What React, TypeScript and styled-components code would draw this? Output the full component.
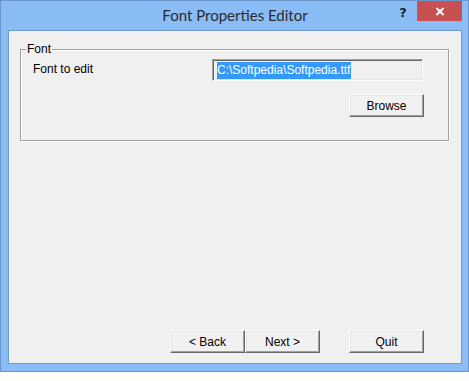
import React from "react";
import styled, { createGlobalStyle } from "styled-components";

const Global = createGlobalStyle`
  html, body { margin: 0; padding: 0; background: #ffffff; }
  * { box-sizing: border-box; }
`;

const Window = styled.div`
  width: 469px;
  height: 372px;
  border: 1px solid #6b96cc;
  background: #8abcf6;
  display: flex;
  flex-direction: column;
  padding: 0 6px 7px 7px;
`;

const TitleBar = styled.div`
  height: 29px;
  display: grid;
  grid-template-columns: 1fr auto 1fr;
  align-items: start;
  margin: 0 -6px 0 -7px;
  padding: 0 6px 0 7px;
`;

const Title = styled.div`
  grid-column: 2;
  font-family: "Lato", "Noto Sans", sans-serif;
  font-size: 15px;
  line-height: 29px;
  color: #2b2b2b;
`;

const Controls = styled.div`
  grid-column: 3;
  display: flex;
  justify-content: flex-end;
  align-items: flex-start;
`;

const HelpButton = styled.div`
  width: 28px;
  height: 21px;
  display: flex;
  align-items: center;
  justify-content: center;
  font-family: "DejaVu Sans", sans-serif;
  font-weight: bold;
  font-size: 13px;
  color: #222;
  padding-top: 1px;
`;

const CloseButton = styled.div`
  width: 45px;
  height: 20px;
  background: #c75050;
  display: flex;
  align-items: center;
  justify-content: center;
`;

const Client = styled.div`
  flex: 1;
  border: 1px solid #6f9ad0;
  background: #f0f0f0;
  display: flex;
  flex-direction: column;
  padding: 18px 12px 10px 11px;
  font-family: "Liberation Sans", Arial, sans-serif;
  font-size: 12px;
  color: #000;
`;

const GroupBox = styled.div`
  position: relative;
  height: 92px;
  border: 1px solid #a0a0a0;
  box-shadow: inset 1px 1px 0 #ffffff, 1px 1px 0 #ffffff;
  padding: 9px 25px 0 12px;
  display: flex;
  flex-direction: column;
  gap: 13px;
`;

const Caption = styled.span`
  position: absolute;
  top: -8px;
  left: 5px;
  padding: 0 1px;
  background: #f0f0f0;
  line-height: 14px;
`;

const Row = styled.div`
  display: flex;
  align-items: center;
  justify-content: ${(p: { $end?: boolean }) => (p.$end ? "flex-end" : "space-between")};
`;

const FieldLabel = styled.span`
  line-height: 14px;
  margin-top: -2px;
`;

const TextBox = styled.div`
  width: 211px;
  height: 22px;
  background: #f0f0f0;
  border-top: 1px solid #a0a0a0;
  border-left: 1px solid #a0a0a0;
  border-bottom: 1px solid #ffffff;
  border-right: 1px solid #ffffff;
  box-shadow: inset 1px 1px 0 #696969, inset -1px -1px 0 #e3e3e3;
  padding: 2px 0 0 4px;
  display: flex;
  align-items: flex-start;
`;

const Selection = styled.span`
  background: #3399ff;
  color: #ffffff;
  line-height: 17px;
  padding-right: 1px;
`;

const Button = styled.button`
  width: 75px;
  height: 23px;
  margin: 0;
  padding: 0;
  font-family: "Liberation Sans", Arial, sans-serif;
  font-size: 12px;
  color: #000;
  background: #f1f1f1;
  border-top: 1px solid #ffffff;
  border-left: 1px solid #ffffff;
  border-bottom: 1px solid #696969;
  border-right: 1px solid #696969;
  box-shadow: inset -1px -1px 0 #a0a0a0, inset 1px 1px 0 #e3e3e3;
  margin-right: ${(p: { $nudge?: boolean }) => (p.$nudge ? "-1px" : "0")};
`;

const Spacer = styled.div`
  flex: 1;
`;

const ButtonBar = styled.div`
  display: flex;
  justify-content: flex-end;
  gap: 29px;
  padding-right: 25px;
`;

const ButtonPair = styled.div`
  display: flex;
`;

export default function App() {
  return (
    <>
      <Global />
      <Window>
        <TitleBar>
          <Title>Font Properties Editor</Title>
          <Controls>
            <HelpButton>?</HelpButton>
            <CloseButton>
              <svg width="10" height="9" viewBox="0 0 10 9">
                <path d="M1.5 1 L8.5 8 M8.5 1 L1.5 8" stroke="#fff" strokeWidth="2" fill="none" />
              </svg>
            </CloseButton>
          </Controls>
        </TitleBar>
        <Client>
          <GroupBox>
            <Caption>Font</Caption>
            <Row>
              <FieldLabel>Font to edit</FieldLabel>
              <TextBox>
                <Selection>C:\Softpedia\Softpedia.ttf</Selection>
              </TextBox>
            </Row>
            <Row $end>
              <Button $nudge>Browse</Button>
            </Row>
          </GroupBox>
          <Spacer />
          <ButtonBar>
            <ButtonPair>
              <Button>&lt; Back</Button>
              <Button>Next &gt;</Button>
            </ButtonPair>
            <Button>Quit</Button>
          </ButtonBar>
        </Client>
      </Window>
    </>
  );
}
